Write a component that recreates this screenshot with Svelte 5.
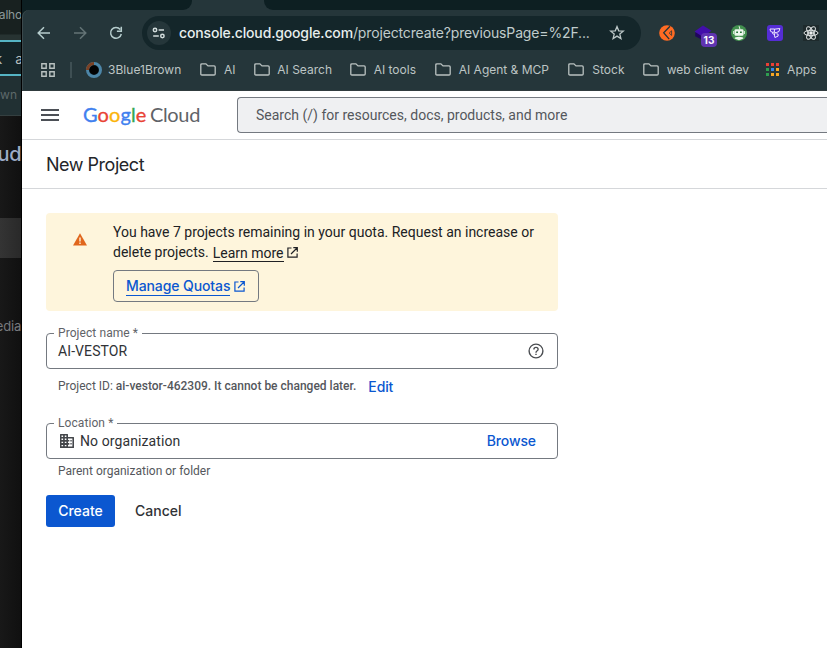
<script>
  const folders = [
    { name: 'AI', w: 35.5, gap: 18.5 },
    { name: 'AI Search', w: 78, gap: 18 },
    { name: 'AI tools', w: 66, gap: 19 },
    { name: 'AI Agent & MCP', w: 114, gap: 19 },
    { name: 'Stock', w: 56.5, gap: 18.5 },
    { name: 'web client dev', w: 106, gap: 17 }
  ];
  const appColors = ['#ea3f35', '#ea3f35', '#ea3f35', '#2f9e50', '#3486ea', '#f6a623', '#2f9e50', '#f6a623', '#f6a623'];
</script>

{#snippet folder()}
  <svg class="folder" width="16" height="13" viewBox="0 0 16 13" fill="none" stroke="#b9c1c0" stroke-width="1.3">
    <path d="M.8 11V1.9Q.8.8 1.9.8h4L8 2.9h6.1q1.1 0 1.1 1.1v6.9q0 1.1-1.1 1.1H1.9Q.8 12 .8 11Z" />
  </svg>
{/snippet}

{#snippet launch()}
  <svg width="11" height="11" viewBox="0 0 11 11" fill="none" stroke="currentColor" stroke-width="1.2">
    <path d="M4.500 1H.9v9.200h9.200V6.500M6.300.7h4v4M10 1 4 7" />
  </svg>
{/snippet}

<div class="screen">
  <aside class="behind">
    <div class="b-tab"><span class="b1">alho</span></div>
    <div class="b-url"><span class="b2">k</span><span class="b2a">a</span></div>
    <div class="b-marks"><span class="b3">own</span></div>
    <div class="b-page">
      <span class="b4">ud</span>
      <div class="b-row"></div>
      <span class="b5">edia</span>
    </div>
  </aside>

  <main class="window">
    <div class="tabs"><i class="left"></i><i class="right"></i></div>
    <div class="chromeback">
      <header class="chrome">
        <div class="toolbar">
          <svg class="back" width="14" height="14" viewBox="0 0 14 14" fill="none" stroke="#b6cdcd" stroke-width="1.5"><path d="M13 7H1.5M7 1.2 1.2 7 7 12.8" /></svg>
          <svg class="fwd" width="14" height="14" viewBox="0 0 14 14" fill="none" stroke="#647476" stroke-width="1.5"><path d="M1 7h11.5M7 1.2 12.8 7 7 12.8" /></svg>
          <svg class="reload" width="14" height="14" viewBox="0 0 14 14" fill="none" stroke="#b6cdcd" stroke-width="1.5"><path d="M11.2 3.4A5.4 5.4 0 1 0 12.3 8M12.3.8v4.4H7.9" /></svg>
          <div class="address">
            <span class="site">
              <svg width="14" height="12" viewBox="0 0 14 12" fill="none" stroke="#d3dddd" stroke-width="1.5"><circle cx="3" cy="3" r="1.7" /><path d="M6.6 3H12M1.2 9h5.6" /><circle cx="10.4" cy="9" r="1.7" /></svg>
            </span>
            <span class="url"><b>console.cloud.google.com</b><span>/projectcreate?previousPage=%2F...</span></span>
            <svg class="star" width="16" height="16" viewBox="0 0 16 16" fill="none" stroke="#bdc8c8" stroke-width="1.3"><path d="m8 1.600 1.700 4.200 4.600.35-3.500 2.950 1.100 4.450L8 11.100l-3.900 2.450L5.200 9.100 1.700 6.150l4.600-.35Z" /></svg>
          </div>
          <div class="extensions">
            <svg width="16" height="16" viewBox="0 0 16 16"><circle cx="8" cy="8" r="7.8" fill="#ff6b23" /><path d="M11 1.200 4.700 7.800l5.500 6.300" fill="none" stroke="#25363a" stroke-width="1.3" /><path d="m12.600 5.800-2.400 2.300 2.400 2.300Z" fill="#ff6b23" stroke="#25363a" stroke-width=".8" /></svg>
            <span class="hat">
              <svg width="18" height="16" viewBox="0 0 18 16"><path d="M1.2 7.500v3.800l7.800 4V6Z" fill="#20055d" /><path d="m9 .5 8.500 5.200L9 12 .5 6.400Z" fill="#420eaa" /></svg>
              <em>13</em>
            </span>
            <svg width="16" height="16" viewBox="0 0 16 16"><circle cx="8" cy="8" r="8" fill="#43904f" /><path d="m9 4.500-.9-3.300" stroke="#e8f4e8" /><rect x="3.500" y="4.300" width="9" height="6.500" rx="1.300" fill="#edf7ee" /><path d="M2.700 6v3m10.600-3v3" stroke="#edf7ee" /><path d="M5.200 7.200h1.800m2 0h1.800" stroke="#28763a" stroke-width="1.600" /><path d="M3.600 13.500q0-1.700 4.400-1.700t4.400 1.700L8 15.300Z" fill="#edf7ee" /></svg>
            <svg width="16" height="16" viewBox="0 0 16 16"><rect width="16" height="16" rx="3" fill="#552dd5" /><path d="M3 4h4.400v3.200H5.400Q3 7.200 3 4Zm4.400.2 5.400-.7q.2 4-3.600 4.100H7.400M5.400 7.200q-.2 2.200 2 2.200M8 7.700l-.6 2.400.5 2.400 3.200-1.400V9.200l-1.700-.5" fill="none" stroke="#eee8ff" stroke-width="1" /></svg>
            <span class="atom"><svg width="16" height="16" viewBox="0 0 16 16" fill="none" stroke="#e1e5e5" stroke-width="1"><ellipse cx="8" cy="8" rx="7" ry="2.7" /><ellipse cx="8" cy="8" rx="7" ry="2.7" transform="rotate(60 8 8)" /><ellipse cx="8" cy="8" rx="7" ry="2.7" transform="rotate(120 8 8)" /><circle cx="8" cy="8" r="1.3" fill="#fff" /></svg></span>
          </div>
        </div>
        <nav class="bookmarks">
          <svg class="grid" width="14" height="14" viewBox="0 0 14 14" fill="none" stroke="#b9c1c0" stroke-width="1.4"><path d="M.8.8h4.4v4.4H.8Zm8 0h4.4v4.4H8.8Zm-8 8h4.4v4.4H.8Zm8 0h4.4v4.4H8.8Z" /></svg>
          <i class="sep"></i>
          <svg class="eye" width="16" height="16" viewBox="0 0 16 16"><circle cx="8" cy="8" r="6.500" fill="#0b1418" stroke="#4d86a8" stroke-width="3" /><path d="M1.500 8A6.500 6.500 0 0 1 8 1.500" fill="none" stroke="#7b4124" stroke-width="3" /><circle cx="8" cy="8" r="4.300" fill="#020304" /></svg>
          <span class="brown">3Blue1Brown</span>
          {#each folders as f}
            <span class="mark" style="width:{f.w}px;margin-right:{f.gap}px">{@render folder()}<span>{f.name}</span></span>
          {/each}
          <span class="apps">{#each appColors as c}<i style="background:{c}"></i>{/each}</span>
          <span class="appname">Apps</span>
        </nav>
      </header>
    </div>

    <div class="cloudbar">
      <svg width="18" height="12" viewBox="0 0 18 12" fill="#4c5056"><path d="M0 0h18v2H0Zm0 5h18v2H0Zm0 5h18v2H0Z" /></svg>
      <div class="logo"><span class="google"><span class="bl">G</span><span class="rd">o</span><span class="ye">o</span><span class="bl">g</span><span class="gr">l</span><span class="rd">e</span></span><span class="cloud">Cloud</span></div>
      <div class="search">Search (/) for resources, docs, products, and more</div>
    </div>
    <h1>New Project</h1>

    <section class="content">
      <div class="notice">
        <svg class="warn" width="14" height="13" viewBox="0 0 14 13"><path d="M7 .2 14 12.500H0Z" fill="#e0661d" /><path d="M7 4.500v4" stroke="#fff5dc" stroke-width="1.4" /><path d="M7 9.500v1.400" stroke="#fff5dc" stroke-width="1.4" /></svg>
        <div class="message">
          <p class="m1">You have 7 projects remaining in your quota. Request an increase or</p>
          <p class="m2">delete projects. <a href="#learn">Learn more</a>{@render launch()}</p>
          <button class="quota"><span>Manage Quotas</span>{@render launch()}</button>
        </div>
      </div>

      <div class="field name">
        <span class="label">Project name *</span>
        <span class="value v1">AI-VESTOR</span>
        <svg class="help" width="16" height="16" viewBox="0 0 16 16" fill="none" stroke="#4a4d51" stroke-width="1.4"><circle cx="8" cy="8" r="6.9" /><path d="M5.900 6.400Q5.900 4.400 8 4.400t2.100 1.800Q10.100 7.300 8.900 8 8 8.600 8 9.700M8 10.700v1.400" /></svg>
      </div>
      <div class="hint"><span class="pid">Project ID: <b>ai-vestor-462309. It cannot be changed later.</b></span><a class="edit" href="#edit">Edit</a></div>
      <div class="field location">
        <span class="label">Location *</span>
        <svg class="org" width="14" height="14" viewBox="0 0 14 14"><path fill="#44474b" fill-rule="evenodd" d="M.5 0h7q.5 0 .5.5V3h5.500q.5 0 .5.5v10q0 .5-.5.5H.5Q0 14 0 13.500V.5Q0 0 .5 0ZM1.500 1.500v1.400h1.600V1.500Zm3.300 0v1.400h1.600V1.500ZM1.500 4.500v1.400h1.600V4.500Zm3.300 0v1.400h1.600V4.500ZM1.500 7.700v1.400h1.600V7.700Zm3.300 0v1.400h1.600V7.700ZM1.500 10.900v1.400h1.600v-1.400Zm3.300 0v1.400h1.600v-1.400ZM8 4.500v1.400h1.300v1.500H8v1.700h1.300v1.600H8v1.700h4.400V4.500Zm2.400 1.400h1.300v1.500h-1.300Zm0 3.200h1.300v1.500h-1.300Z" /></svg>
        <span class="value v2">No organization</span>
        <a class="browse" href="#browse">Browse</a>
      </div>
      <p class="parent">Parent organization or folder</p>
      <div class="actions"><button class="create">Create</button><button class="cancel">Cancel</button></div>
    </section>
  </main>
</div>

<style>
  .screen { display: flex; width: 827px; height: 648px; overflow: hidden; background: #000; font-family: Roboto, sans-serif; }
  .screen *, .screen { box-sizing: border-box; }
  .screen svg { display: block; flex: none; }
  p, h1 { margin: 0; }
  span, p, h1, a { white-space: nowrap; }
  button { font: inherit; margin: 0; padding: 0; cursor: pointer; }

  .behind { width: 21px; margin-right: 1px; flex: none; overflow: hidden; display: flex; flex-direction: column; font-family: Inter, sans-serif; }
  .b-tab { height: 40px; background: linear-gradient(#182120 0 34px, #273332 35px); display: flex; justify-content: flex-end; }
  .b1 { color: #8c9999; font-size: 12px; line-height: 30px; margin-right: -1px; letter-spacing: -.2px; }
  .b-url { height: 36px; background: #142427; border-top: 2px solid #55b4c4; border-bottom: 2px solid #55b4c4; display: flex; justify-content: flex-end; color: #b7bfbf; font-size: 14px; line-height: 33px; }
  .b2 { margin-right: 13px; }
  .b2a { margin-right: -2px; }
  .b-marks { height: 40px; background: #213033; border-bottom: 1px solid #343f40; display: flex; justify-content: flex-end; }
  .b3 { color: #5e696a; font-size: 12px; line-height: 38px; margin-right: 4px; }
  .b-page { flex: 1; background: linear-gradient(90deg, #181818, #101010); display: flex; flex-direction: column; align-items: flex-end; }
  .b4 { color: #9dacc7; font-size: 20px; font-weight: 500; line-height: 24px; margin-top: 26px; letter-spacing: -.5px; }
  .b-row { width: 21px; height: 40px; margin-top: 52px; background: linear-gradient(90deg, #343434, #292929); }
  .b5 { color: #77797d; font-size: 13px; line-height: 20px; margin-top: 58px; letter-spacing: -.2px; }

  .window { width: 805px; flex: none; background: #fff; display: flex; flex-direction: column; }
  .tabs { height: 10px; background: #25363a; display: flex; justify-content: space-between; }
  .tabs .left { width: 169.500px; background: #0d1f22; border-bottom-right-radius: 9px; }
  .tabs .right { width: 563px; background: #0d1f22; border-bottom-left-radius: 9px; }
  .chromeback { background: #0d1f22; }
  .chrome { height: 81px; background: #25363a; border-bottom: 1px solid #303b3e; box-shadow: inset 1px 0 #3b494c; border-top-left-radius: 7px; font-family: Inter, sans-serif; }
  .toolbar { height: 46px; display: flex; align-items: center; padding-left: 15px; }
  .fwd { margin-left: 22px; }
  .reload { margin-left: 22px; }
  .address { width: 499px; height: 34px; margin-left: 19px; border-radius: 17px; background: #14262a; display: flex; align-items: center; padding: 0 16px 0 5px; }
  .site { width: 24px; height: 24px; border-radius: 50%; background: #25363a; display: flex; align-items: center; justify-content: center; }
  .url { margin-left: 8px; font-size: 14px; line-height: 20px; color: #c0cccc; flex: 1; letter-spacing: -.15px; }
  .url b { color: #e7eeee; font-weight: 500; letter-spacing: -.15px; }
  .extensions { display: flex; align-items: center; margin-left: 18px; gap: 20px; }
  .hat { position: relative; width: 16px; height: 16px; }
  .hat svg { margin-left: -1px; }
  .hat em { position: absolute; left: 6px; top: 8px; width: 16px; height: 14px; border-radius: 4px; background: #6034b1; color: #fff; font: 700 10px/14px Inter, sans-serif; text-align: center; }
  .atom { background: #1e2a2c; }
  .bookmarks { height: 27px; display: flex; align-items: center; padding-left: 19px; color: #bdc5c4; font-size: 12px; line-height: 18px; letter-spacing: .1px; }
  .sep { width: 2px; height: 16px; background: #3e4f53; margin-left: 15px; }
  .eye { margin-left: 14px; }
  .brown { width: 74px; margin: 0 18px 0 6px; letter-spacing: .05px; }
  .mark { display: flex; align-items: center; justify-content: space-between; flex: none; letter-spacing: 0; }
  .apps { display: grid; grid-template-columns: repeat(3, 3px); gap: 2px; }
  .apps i { height: 3px; }
  .appname { margin-left: 8px; }

  .cloudbar { height: 49px; border-bottom: 1px solid #d5d7da; display: flex; align-items: center; padding-left: 19px; }
  .logo { display: flex; width: 117px; margin: -2px 0 0 24px; font: 400 20px/26px Lato, sans-serif; justify-content: space-between; }
  .google { -webkit-text-stroke: .35px; letter-spacing: .1px; }
  .bl { color: #4080ef; } .rd { color: #e94335; } .ye { color: #fbb40b; } .gr { color: #34a853; }
  .cloud { color: #5f6368; letter-spacing: -.35px; }
  .search { margin-left: 37px; flex: 1; height: 36px; border: 1px solid #747980; border-right: 0; border-radius: 4px 0 0 4px; background: #eff0f2; padding-left: 18px; color: #54575c; font-size: 14px; line-height: 35px; }
  h1 { height: 49px; border-bottom: 1px solid #d5d7da; padding-left: 24px; font: 400 18px/49px Inter, sans-serif; color: #24262a; letter-spacing: -.48px; }
  .content { padding: 24px 0 0 24px; width: 536px; color: #202124; }
  .notice { height: 98px; border-radius: 4px; background: #fef5dc; display: flex; }
  .warn { margin: 20px 0 0 27px; }
  .message { margin-left: 26px; padding-top: 9px; font-size: 14px; line-height: 20px; }
  .m2 { display: flex; align-items: center; }
  .m2 a { color: inherit; text-decoration: none; height: 19px; border-bottom: 1px solid; margin: 0 3px 0 4px; }
  .quota { width: 146px; height: 32px; margin-top: 8px; border: 1px solid #747980; border-radius: 4px; background: none; color: #0b57d0; padding-left: 12px; display: flex; align-items: center; gap: 4px; font: 500 14px/19px Inter, sans-serif; letter-spacing: -.1px; }
  .quota span { border-bottom: 1px solid; }
  .field { position: relative; height: 36px; border: 1px solid #747980; border-radius: 4px; display: flex; align-items: center; padding-left: 11px; font-size: 14px; color: #303236; }
  .name { margin-top: 22px; padding-right: 13px; justify-content: space-between; }
  .v1 { letter-spacing: .1px; }
  .label { position: absolute; left: 7px; top: -9px; padding: 0 4px; background: #fff; font-size: 12px; line-height: 16px; color: #5f6368; letter-spacing: .08px; }
  .hint { height: 36px; padding-left: 12px; display: flex; align-items: center; font-size: 12px; color: #54575c; }
  .pid { margin-top: -2px; }
  .hint b { font-weight: 500; }
  .edit, .browse { color: #0b57d0; text-decoration: none; font: 500 14px/20px Inter, sans-serif; letter-spacing: -.1px; }
  .edit { margin-left: 12px; }
  .location { margin-top: 18px; padding-left: 13px; }
  .v2 { margin-left: 6px; flex: 1; letter-spacing: .1px; }
  .browse { margin-right: 21px; }
  .parent { padding-left: 12px; margin-top: 4px; font-size: 12px; line-height: 16px; color: #54575c; }
  .actions { margin-top: 16px; display: flex; font: 500 14px/20px Inter, sans-serif; letter-spacing: -.05px; }
  .create { width: 69px; height: 32px; border: 0; border-radius: 3px; background: #0b57d0; color: #fff; }
  .cancel { border: 0; background: none; color: #303236; margin-left: 20px; }
</style>
